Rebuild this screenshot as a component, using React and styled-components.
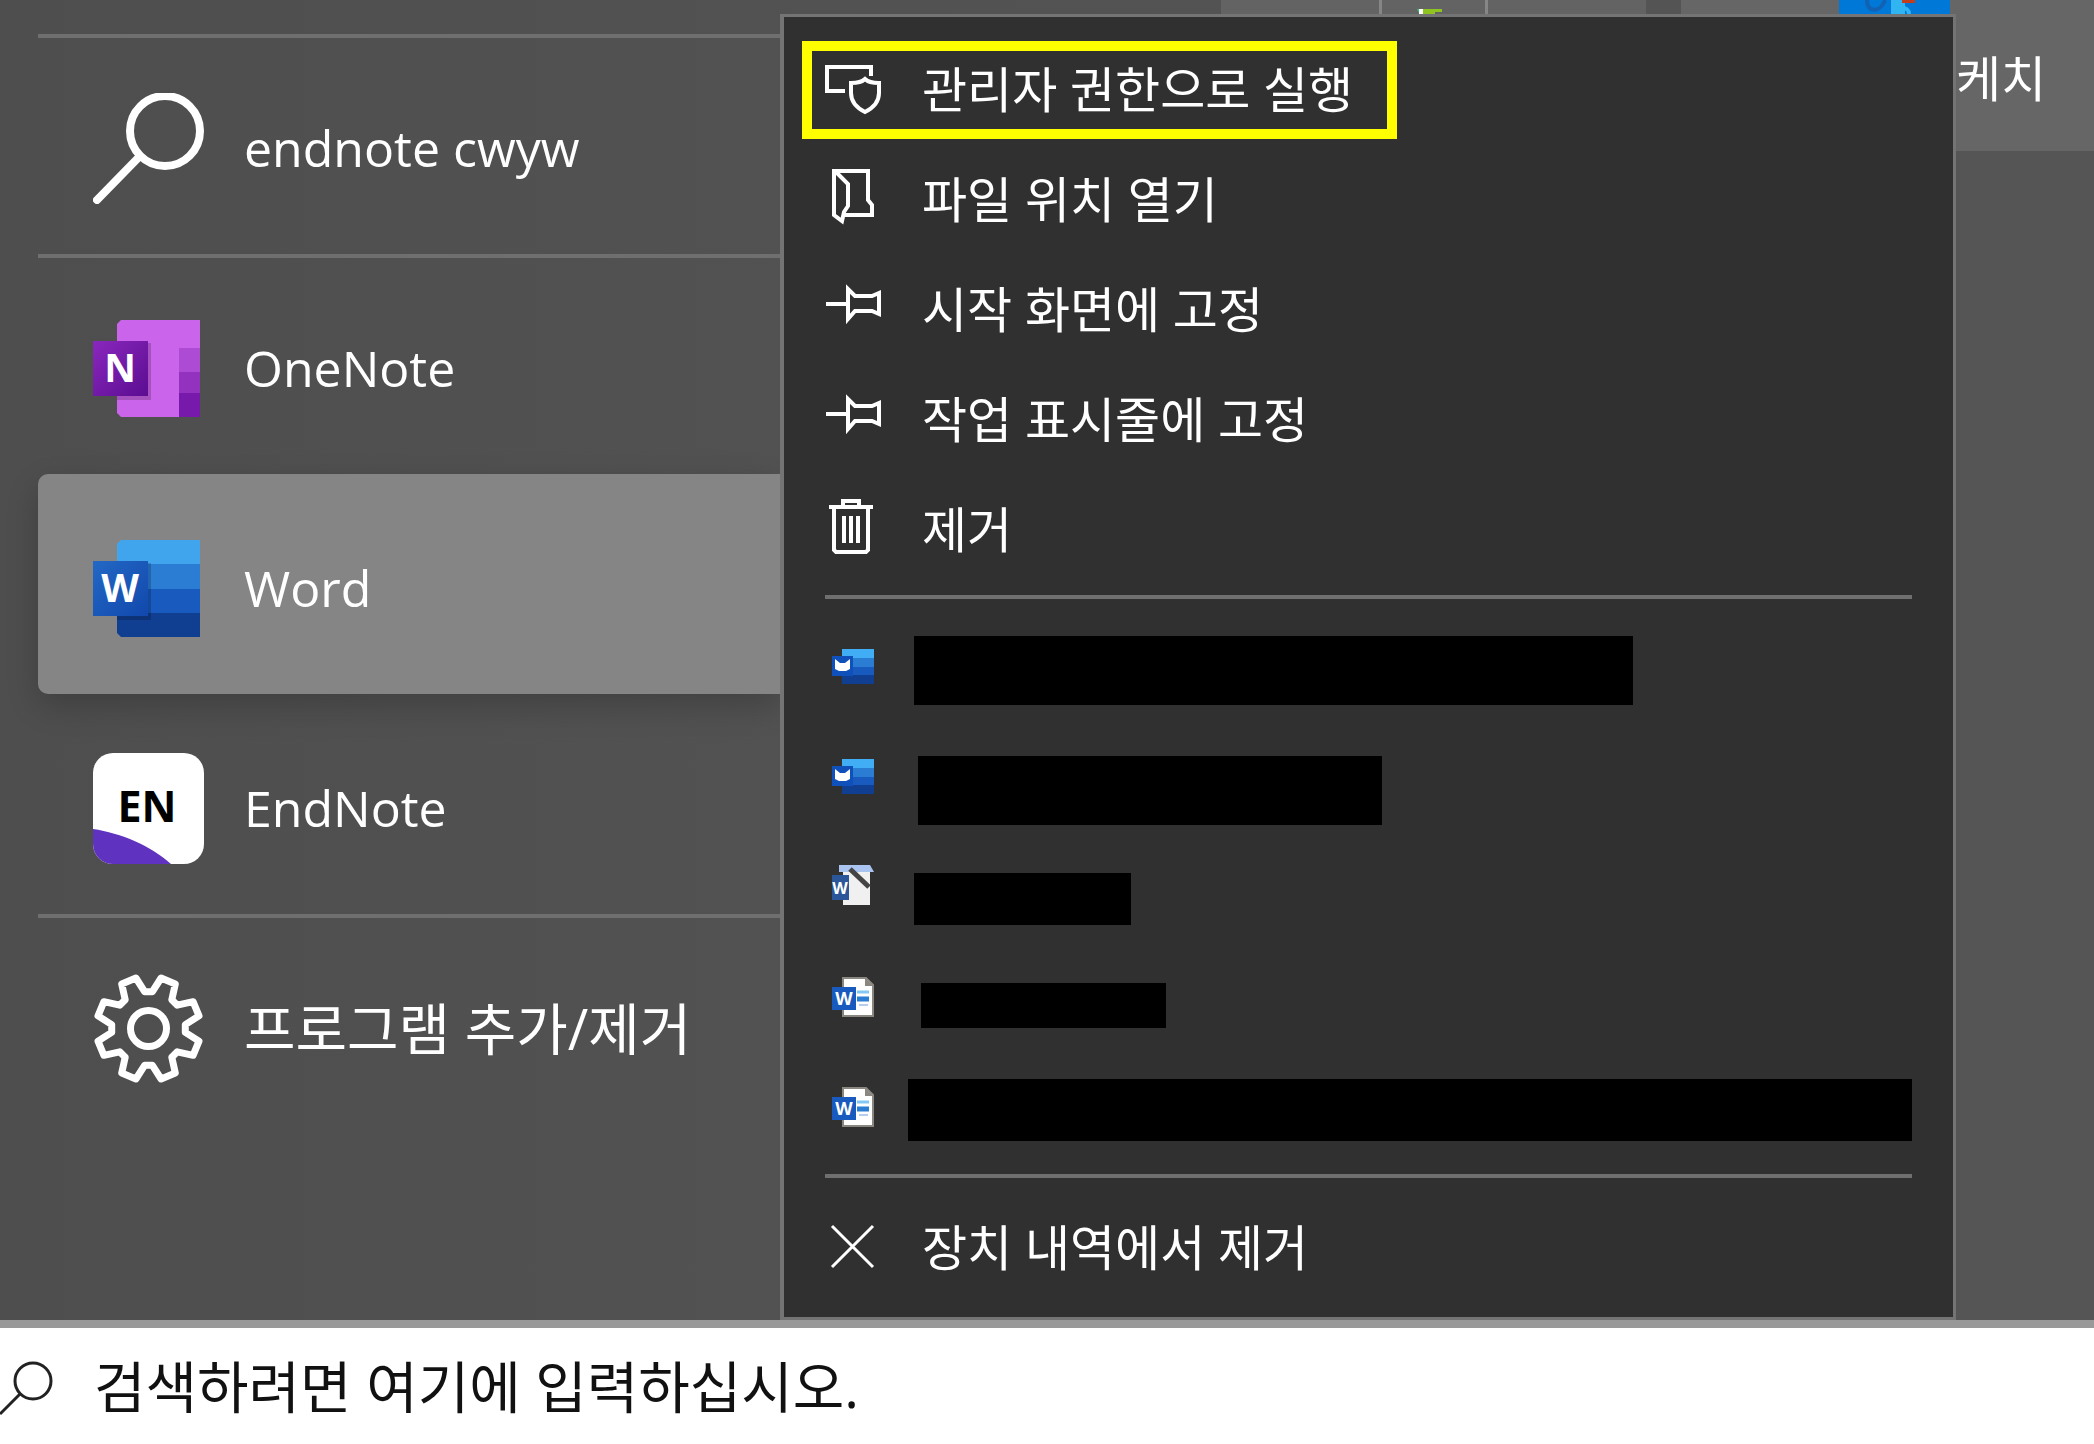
import React from "react";
import styled, { createGlobalStyle } from "styled-components";

const latin = '"Open Sans", "Noto Sans CJK KR", sans-serif';
const line = "#6f6f6f";

const GlobalStyle = createGlobalStyle`
  * {
    box-sizing: border-box;
  }
  body {
    margin: 0;
    background: #515151;
    color: white;
    font-family: ${latin};
  }
  button {
    border: 0;
    padding: 0;
    background: none;
    color: inherit;
    font: inherit;
    text-align: left;
  }
`;

const Screen = styled.div`
  display: flex;
  flex-direction: column;
  min-height: 100vh;
`;

const SearchFlyout = styled.main`
  display: flex;
  flex: 1;
  border-bottom: 8px solid #999999;
  background: linear-gradient(90deg, #4e4e4e, #525252 40%, #555555);
`;

const Results = styled.ul`
  flex: 0 0 780px;
  min-width: 0;
  margin: 0;
  padding: 34px 0 0 38px;
  list-style: none;
`;

const Result = styled.li`
  border-top: ${props => (props.$divided ? `4px solid ${line}` : "0")};
`;

const ResultButton = styled.button`
  display: flex;
  align-items: center;
  gap: 40px;
  width: 100%;
  height: ${props => (props.$divided ? 216 : 220)}px;
  padding: ${props => (props.$divided ? 4 : 8)}px 0 0 55px;
  border-radius: 10px 0 0 10px;
  background: ${props => (props.$selected ? "#858585" : "none")};
  box-shadow: ${props =>
    props.$selected ? "0 12px 32px rgba(0, 0, 0, 0.2)" : "none"};
  font-size: ${props => (props.$korean ? 56 : 50)}px;
  line-height: 72px;
  white-space: nowrap;

  svg {
    flex: none;
  }
`;

const Detail = styled.section`
  position: relative;
  flex: 1;
  min-width: 0;
`;

const Tiles = styled.div`
  display: flex;
  height: 151px;
  padding-left: 441px;
`;

const AppTile = styled.div`
  display: flex;
  flex: 0 0 425px;
  margin-right: 35px;
  background: #636363;
`;

const TileCell = styled.div`
  flex: 1 1 ${props => props.$width}px;
  padding-left: 35px;
  border-left: ${props => (props.$first ? "0" : "3px solid #868686")};
`;

const SketchTile = styled.div`
  display: flex;
  flex: 1;
  gap: 6px;
  padding-left: 158px;
  background: #666666;
  font-size: 49px;
  line-height: 156px;
  white-space: nowrap;

  svg {
    flex: none;
  }
`;

const ContextMenu = styled.div`
  position: absolute;
  top: 14px;
  left: 0;
  right: 138px;
  bottom: 0;
  padding: 17px 41px 12px 38px;
  border: solid #747474;
  border-width: 3px 3px 3px 4px;
  background: #303030;
`;

const MenuItem = styled.button`
  display: flex;
  align-items: center;
  gap: 40px;
  width: 100%;
  height: 110px;
  font-size: 49px;
  line-height: 64px;
  white-space: nowrap;

  svg {
    flex: none;
  }
`;

const Highlight = styled.div`
  position: absolute;
  top: 24px;
  left: 18px;
  width: 595px;
  height: 98px;
  border: 10px solid #ffff00;
  pointer-events: none;
`;

const Separator = styled.hr`
  height: 4px;
  margin: 11px 0 14px 3px;
  border: 0;
  background: ${line};
`;

const RecentItem = styled(MenuItem)`
  position: relative;
`;

// covers the file name
const Redaction = styled.span`
  position: absolute;
  top: ${props => props.$top}px;
  left: ${props => props.$left}px;
  width: ${props => props.$width};
  height: ${props => props.$height}px;
  background: black;
`;

const Taskbar = styled.label`
  display: flex;
  align-items: center;
  gap: 38px;
  height: 116px;
  background: white;

  svg {
    flex: none;
  }
`;

const SearchInput = styled.input`
  flex: 1;
  min-width: 0;
  padding: 0;
  border: 0;
  outline: 0;
  background: none;
  font-family: ${latin};
  font-size: 56px;
  line-height: 76px;

  &::placeholder {
    color: #111111;
    opacity: 1;
  }
`;

const Letter = styled.text`
  font-family: "Open Sans", sans-serif;
  font-weight: 700;
  font-size: ${props => props.$size}px;
  text-anchor: middle;
`;

const SearchIcon = () => (
  <svg width="111" height="111" fill="none" stroke="white" strokeWidth="8">
    <circle cx="72" cy="38" r="35" />
    <path d="M47 63 4 107" strokeLinecap="round" />
  </svg>
);

const OneNoteIcon = () => (
  <svg width="111" height="111">
    <defs>
      <linearGradient id="noteBadge" x2="1" y2="1">
        <stop stopColor="#8a27bd" />
        <stop offset="1" stopColor="#5b0d91" />
      </linearGradient>
    </defs>
    <path d="M28 7H107V104H28L24 100V11Z" fill="#ca64ea" />
    <path d="M86 35H107V59H86Z" fill="#ae4bd5" />
    <path d="M86 59H107V80H86Z" fill="#9332bf" />
    <path d="M86 80H107V104H86Z" fill="#7719aa" />
    <path d="M24 30H58V87H24Z" fill="#000000" opacity="0.18" />
    <path d="M0 28H55V83H0Z" fill="url(#noteBadge)" />
    <Letter x="27" y="69" fill="white" $size={39}>
      N
    </Letter>
  </svg>
);

const WordIcon = () => (
  <svg width="111" height="111">
    <defs>
      <linearGradient id="wordBadge" x2="1" y2="1">
        <stop stopColor="#2368c4" />
        <stop offset="1" stopColor="#1148ad" />
      </linearGradient>
    </defs>
    <path d="M28 7H107V31H24V11Z" fill="#41a5ee" />
    <path d="M24 31H107V56H24Z" fill="#2b7cd3" />
    <path d="M24 56H107V80H24Z" fill="#185abd" />
    <path d="M24 80H107V104H28L24 100Z" fill="#103f91" />
    <path d="M24 30H58V87H24Z" fill="#000000" opacity="0.18" />
    <path d="M0 28H55V83H0Z" fill="url(#wordBadge)" />
    <Letter x="27" y="69" fill="white" $size={39}>
      W
    </Letter>
  </svg>
);

const EndNoteIcon = () => (
  <svg width="111" height="111">
    <clipPath id="endnoteShape">
      <rect width="111" height="111" rx="20" />
    </clipPath>
    <g clipPath="url(#endnoteShape)">
      <rect width="111" height="111" fill="white" />
      <path d="M0 76C28 80 58 93 78 111H0Z" fill="#5f33bf" />
    </g>
    <Letter x="54" y="69" fill="black" $size={43}>
      EN
    </Letter>
  </svg>
);

const gearPoints = () => {
  const points = [];
  const corner = (deg, r) => {
    const a = (deg * Math.PI) / 180;
    points.push(
      `${(55.5 + r * Math.sin(a)).toFixed(1)},${(55.5 - r * Math.cos(a)).toFixed(1)}`
    );
  };
  for (let tooth = 0; tooth < 8; tooth++) {
    const start = tooth * 45;
    corner(start - 6, 37);
    corner(start + 6, 37);
    corner(start + 14, 52);
    corner(start + 31, 52);
  }
  return points.join(" ");
};

const GearIcon = () => (
  <svg width="111" height="111" fill="none" stroke="white" strokeWidth="7">
    <polygon points={gearPoints()} strokeLinejoin="round" />
    <circle cx="55.5" cy="55.5" r="18" />
  </svg>
);

const MenuIcon = ({ children }) => (
  <svg
    width="60"
    height="60"
    fill="none"
    stroke="white"
    strokeWidth="4"
    aria-hidden="true"
  >
    {children}
  </svg>
);

const AdminIcon = () => (
  <MenuIcon>
    <path d="M23 32H5V8H49V17" />
    <path d="M43 20C40 23 35 24 29 24V34C29 43 35 49 43 53C51 49 57 43 57 34V24C51 24 46 23 43 20Z" />
  </MenuIcon>
);

const FolderIcon = () => (
  <MenuIcon>
    <path d="M21 46H50V36L46 31V2H12V46L20 52L22 43L26 37V15L14 3" />
  </MenuIcon>
);

const PinIcon = () => (
  <MenuIcon>
    <path d="M4 25H25M26 10V40L33 32H50L57 35V14L50 17H33Z" />
  </MenuIcon>
);

const TrashIcon = () => (
  <MenuIcon>
    <path d="M7 8H51M21 8V2H37V8M12 8V51L14 53H44L46 51V8" />
    <path d="M22 17V44M29 17V44M36 17V44" />
  </MenuIcon>
);

const CloseIcon = () => (
  <MenuIcon>
    <path d="M10 9 51 50M51 9 10 50" strokeWidth="3" />
  </MenuIcon>
);

const WordSmallIcon = () => (
  <svg width="60" height="60">
    <path d="M20 11H52V20H20Z" fill="#41adf5" />
    <path d="M20 20H52V29H20Z" fill="#2b7cd3" />
    <path d="M20 29H52V37H20Z" fill="#185abd" />
    <path d="M20 37H52V46H20Z" fill="#103f91" />
    <path d="M10 18H31V38H10Z" fill="#0f50ba" />
    <path d="M13 21 18 25H23L28 21V31L24 33H17L13 31Z" fill="white" />
  </svg>
);

const TemplateIcon = () => (
  <svg width="60" height="60">
    <path d="M21 12H48V47H21Z" fill="#f0f0f0" />
    <path d="M17 7H48L52 14H17Z" fill="#a9c4f0" />
    <path d="M10 17H27V42H10Z" fill="#2b579a" />
    <path d="M28 11 47 29" stroke="#444444" strokeWidth="5" />
    <Letter x="18" y="36" fill="white" $size={16}>
      W
    </Letter>
  </svg>
);

const DocumentIcon = () => (
  <svg width="60" height="60">
    <path d="M21 10H44L51 17V48H21Z" fill="white" stroke="#8a8680" strokeWidth="2" />
    <path d="M43 10V18H51Z" fill="#8a8680" />
    <path d="M35 24H47" stroke="#83c8f5" strokeWidth="3" />
    <path d="M35 31H47" stroke="#2b7cd3" strokeWidth="5" />
    <path d="M37 37H46" stroke="#b5cdee" strokeWidth="2" />
    <path d="M10 19H34V42H10Z" fill="#185abd" />
    <Letter x="22" y="37" fill="white" $size={18}>
      W
    </Letter>
  </svg>
);

const AppTileIcon = () => (
  <svg width="26" height="8">
    <path d="M0 0H6V4H2Z" fill="#2fc46b" />
    <path d="M2 0H6V7H2Z" fill="white" />
    <path d="M6 0H25V3H18V7H6Z" fill="#8fc31f" />
  </svg>
);

const SketchTileIcon = () => (
  <svg width="111" height="14">
    <path d="M0 0H111V14H0Z" fill="#0078d7" />
    <path d="M28 0C28 14 42 12 46 0" fill="none" stroke="#1262b3" strokeWidth="4" />
    <path d="M52 0H66V14H52Z" fill="#30b4f2" />
    <path d="M58 14C58 6 70 6 70 14" fill="none" stroke="#30b4f2" strokeWidth="4" />
    <path d="M63 0H76V3H63Z" fill="#c43e1c" />
  </svg>
);

const results = [
  { name: "endnote cwyw", icon: <SearchIcon />, divided: true },
  { name: "OneNote", icon: <OneNoteIcon />, divided: true },
  { name: "Word", icon: <WordIcon />, selected: true },
  { name: "EndNote", icon: <EndNoteIcon /> },
  { name: "프로그램 추가/제거", icon: <GearIcon />, divided: true, korean: true }
];

const actions = [
  { name: "관리자 권한으로 실행", icon: <AdminIcon /> },
  { name: "파일 위치 열기", icon: <FolderIcon /> },
  { name: "시작 화면에 고정", icon: <PinIcon /> },
  { name: "작업 표시줄에 고정", icon: <PinIcon /> },
  { name: "제거", icon: <TrashIcon /> }
];

const recent = [
  { icon: <WordSmallIcon />, top: 23, left: 92, width: "719px", height: 69 },
  { icon: <WordSmallIcon />, top: 33, left: 96, width: "464px", height: 69 },
  { icon: <TemplateIcon />, top: 40, left: 92, width: "217px", height: 52 },
  { icon: <DocumentIcon />, top: 40, left: 99, width: "245px", height: 45 },
  { icon: <DocumentIcon />, top: 26, left: 86, width: "calc(100% - 86px)", height: 62 }
];

const App = () => {
  return (
    <Screen>
      <GlobalStyle />
      <SearchFlyout>
        <Results>
          {results.map(item => (
            <Result key={item.name} $divided={item.divided}>
              <ResultButton
                $divided={item.divided}
                $selected={item.selected}
                $korean={item.korean}
              >
                {item.icon}
                <span>{item.name}</span>
              </ResultButton>
            </Result>
          ))}
        </Results>
        <Detail>
          <Tiles>
            <AppTile>
              <TileCell $first $width={158} />
              <TileCell $width={106}>
                <AppTileIcon />
              </TileCell>
              <TileCell $width={161} />
            </AppTile>
            <SketchTile>
              <SketchTileIcon />
              <span>케치</span>
            </SketchTile>
          </Tiles>
          <ContextMenu>
            {actions.map(item => (
              <MenuItem key={item.name}>
                {item.icon}
                <span>{item.name}</span>
              </MenuItem>
            ))}
            <Separator />
            {recent.map((item, index) => (
              <RecentItem key={index} aria-label={`최근 문서 ${index + 1}`}>
                {item.icon}
                <Redaction
                  $top={item.top}
                  $left={item.left}
                  $width={item.width}
                  $height={item.height}
                />
              </RecentItem>
            ))}
            <Separator />
            <MenuItem>
              <CloseIcon />
              <span>장치 내역에서 제거</span>
            </MenuItem>
            <Highlight />
          </ContextMenu>
        </Detail>
      </SearchFlyout>
      <Taskbar>
        <svg width="56" height="76" fill="none" stroke="#222222" strokeWidth="3">
          <circle cx="33" cy="33" r="18" />
          <path d="M20 46 0 66" />
        </svg>
        <SearchInput type="text" placeholder="검색하려면 여기에 입력하십시오." />
      </Taskbar>
    </Screen>
  );
};

export default App;
